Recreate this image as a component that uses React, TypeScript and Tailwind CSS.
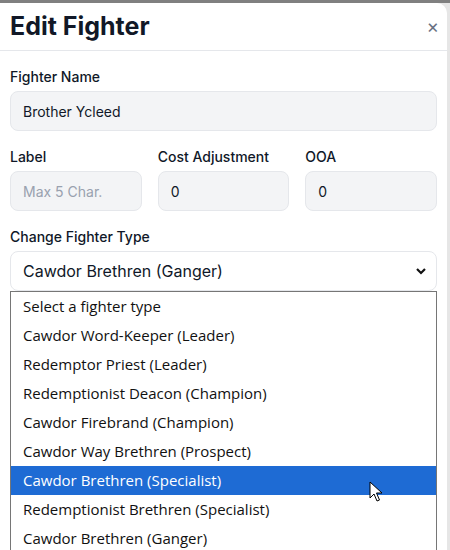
import React from "react";

const options = [
  "Select a fighter type",
  "Cawdor Word-Keeper (Leader)",
  "Redemptor Priest (Leader)",
  "Redemptionist Deacon (Champion)",
  "Cawdor Firebrand (Champion)",
  "Cawdor Way Brethren (Prospect)",
  "Cawdor Brethren (Specialist)",
  "Redemptionist Brethren (Specialist)",
  "Cawdor Brethren (Ganger)",
];

const inputCls =
  "h-10 w-full rounded-lg border border-gray-200 bg-gray-100 px-3 text-[14px] text-gray-900 flex items-center";

export default function App() {
  return (
    <div
      className="relative h-[550px] w-[450px] overflow-hidden bg-[#e6e6e6]"
      style={{ fontFamily: "Inter, 'Liberation Sans', sans-serif" }}
    >
      <div className="h-[3px] w-full bg-[#808080]" />
      <div className="-mt-[3px] flex">
        <div className="mt-[3px] h-[600px] w-[447px] rounded-tr-[10px] bg-white">
          {/* header */}
          <div className="flex h-[48px] items-center justify-between border-b border-gray-200 pl-[10px] pr-[8px]">
            <h2 className="text-[25px] font-bold text-[#111827]">Edit Fighter</h2>
            <button type="button" className="text-[19px] leading-none text-gray-500" aria-label="Close">
              ×
            </button>
          </div>

          {/* body */}
          <div className="px-[10px] pt-[16px]">
            <label className="block text-[14px] font-medium leading-5 text-gray-900">Fighter Name</label>
            <div className={`mt-1 ${inputCls}`}>Brother Ycleed</div>

            <div className="mt-4 grid grid-cols-3 gap-4">
              <div>
                <label className="block text-[14px] font-medium leading-5 text-gray-900">Label</label>
                <div className={`mt-1 ${inputCls}`}>
                  <span className="text-gray-400">Max 5 Char.</span>
                </div>
              </div>
              <div>
                <label className="block text-[14px] font-medium leading-5 text-gray-900">Cost Adjustment</label>
                <div className={`mt-1 ${inputCls}`}>0</div>
              </div>
              <div>
                <label className="block text-[14px] font-medium leading-5 text-gray-900">OOA</label>
                <div className={`mt-1 ${inputCls}`}>0</div>
              </div>
            </div>

            <label className="mt-4 block text-[14px] font-medium leading-5 text-gray-900">
              Change Fighter Type
            </label>
            <div className="relative mt-1">
              <div className="flex h-10 w-full items-center justify-between rounded-lg border border-gray-200 bg-white pl-3 pr-[9px] text-[16px] text-gray-900">
                <span>Cawdor Brethren (Ganger)</span>
                <svg width="12" height="12" viewBox="0 0 12 12" fill="none" stroke="#111" strokeWidth="2.2">
                  <path d="M2 4l4 4 4-4" />
                </svg>
              </div>

              {/* open native list */}
              <div
                className="absolute left-0 top-[40px] w-full border border-[#767676] bg-white"
                style={{ fontFamily: "'Open Sans', 'Noto Sans', sans-serif" }}
              >
                {options.map((o, i) => (
                  <div
                    key={o}
                    className={`flex h-[29px] items-center pl-3 text-[15px] ${
                      i === 6 ? "bg-[#1e6bd4] text-white" : "text-[#111]"
                    }`}
                  >
                    {o}
                  </div>
                ))}
              </div>
            </div>
          </div>
        </div>
      </div>

      {/* mouse cursor */}
      <svg
        className="absolute left-[369px] top-[481px]"
        width="14"
        height="22"
        viewBox="0 0 14 22"
      >
        <path
          d="M1 1v16l4-4 3 7 2.5-1-3-7h5.5z"
          fill="white"
          stroke="black"
          strokeWidth="1"
          strokeLinejoin="round"
        />
      </svg>
    </div>
  );
}
